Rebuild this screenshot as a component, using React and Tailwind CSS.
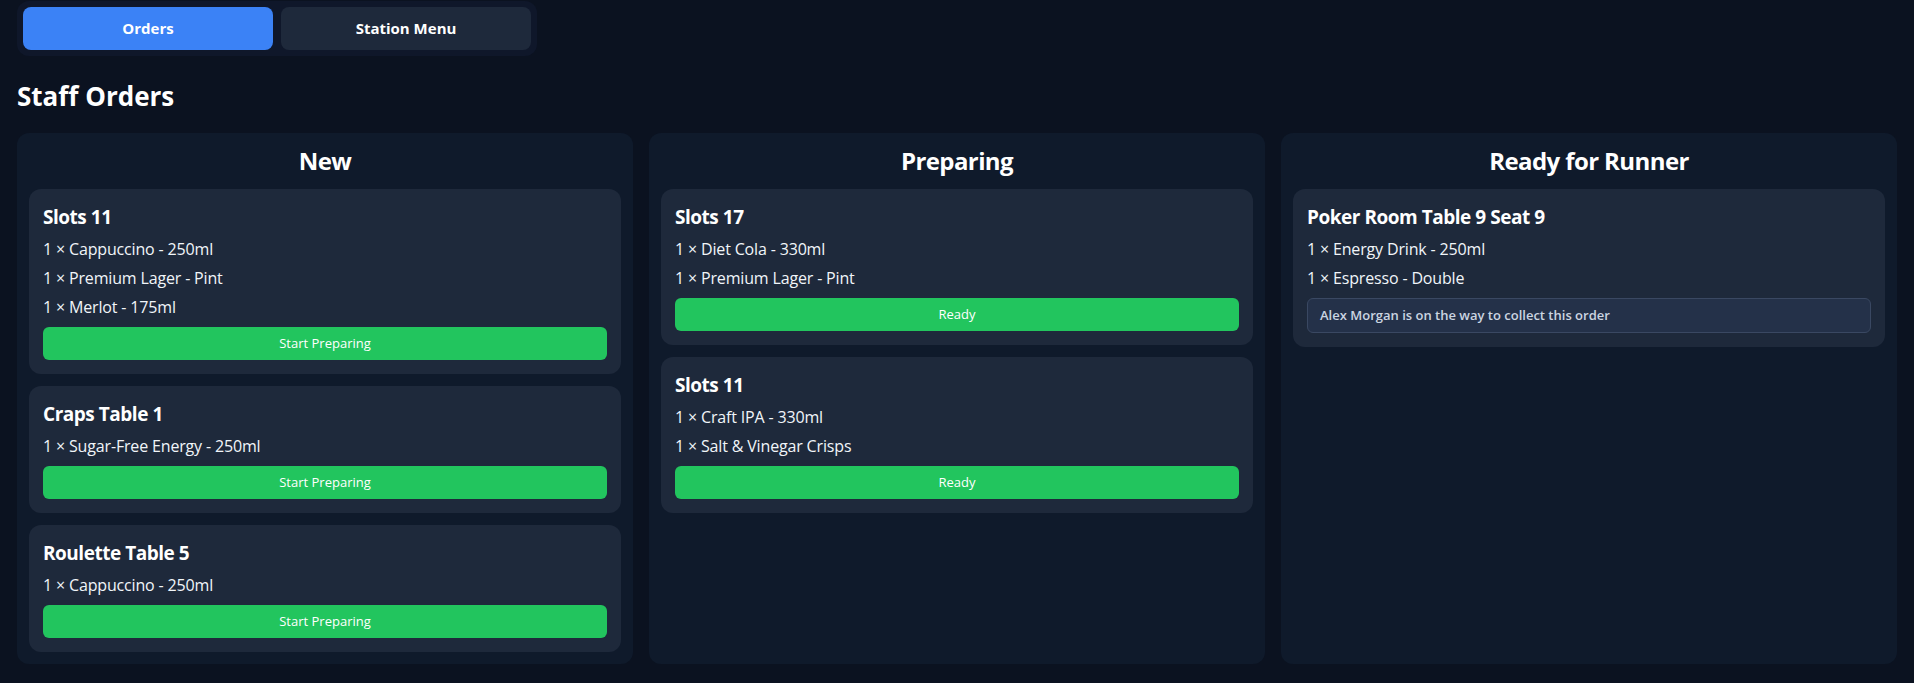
import { useState } from "react";

const columns = [
    {
        title: "New",
        orders: [
            { place: "Slots 11", items: ["Cappuccino - 250ml", "Premium Lager - Pint", "Merlot - 175ml"] },
            { place: "Craps Table 1", items: ["Sugar-Free Energy - 250ml"] },
            { place: "Roulette Table 5", items: ["Cappuccino - 250ml"] },
        ],
        action: "Start Preparing",
    },
    {
        title: "Preparing",
        orders: [
            { place: "Slots 17", items: ["Diet Cola - 330ml", "Premium Lager - Pint"] },
            { place: "Slots 11", items: ["Craft IPA - 330ml", "Salt & Vinegar Crisps"] },
        ],
        action: "Ready",
    },
    {
        title: "Ready for Runner",
        orders: [
            {
                place: "Poker Room Table 9 Seat 9",
                items: ["Energy Drink - 250ml", "Espresso - Double"],
                runner: "Alex Morgan",
            },
        ],
    },
];

function OrderCard({ order, action }) {
    return (
        <div className="bg-[#1e293b] rounded-xl p-3.5">
            <h3 className="text-[19px] font-bold leading-7 tracking-tight text-white">{order.place}</h3>
            <div className="mt-1.5 flex flex-col gap-[5px]">
                {order.items.map((item, i) => (
                    <p key={i} className="text-base leading-6 tracking-[-0.01em] text-[#f1f5f9]">
                        1 × {item}
                    </p>
                ))}
            </div>

            {action && (
                <button className="mt-2 w-full h-[33px] bg-[#22c55e] text-white text-[13px] rounded-md cursor-pointer">
                    {action}
                </button>
            )}

            {order.runner && (
                <div className="mt-2 bg-[#243149] border border-[#3a4862] rounded-md px-3 py-2 text-[13px] leading-[17px] font-semibold text-[#cbd5e1]">
                    {order.runner} is on the way to collect this order
                </div>
            )}
        </div>
    );
}

function App() {
    const [tab, setTab] = useState("orders");

    return (
        <div className="min-h-screen bg-[#0b1220] px-[17px] pb-5 pt-px font-['Open_Sans',sans-serif] text-white">
            {/* Tabs */}
            <div className="inline-flex gap-2 p-1.5 rounded-xl bg-[#0f172a]">
                <button
                    onClick={() => setTab("orders")}
                    className={`w-[250px] h-[43px] rounded-lg text-[15px] font-bold cursor-pointer ${tab === "orders" ? "bg-[#3b82f6]" : "bg-[#1e293b]"}`}
                >
                    Orders
                </button>
                <button
                    onClick={() => setTab("menu")}
                    className={`w-[250px] h-[43px] rounded-lg text-[15px] font-bold cursor-pointer ${tab === "menu" ? "bg-[#3b82f6]" : "bg-[#1e293b]"}`}
                >
                    Station Menu
                </button>
            </div>

            <h1 className="mt-[22px] mb-[19px] text-[26px] leading-9 font-bold">Staff Orders</h1>

            {/* Board */}
            <div className="grid grid-cols-3 gap-4">
                {columns.map((col) => (
                    <div key={col.title} className="bg-[#0f1a2b] rounded-xl p-3">
                        <h2 className="text-2xl leading-8 font-bold tracking-tight text-center mb-3">{col.title}</h2>
                        <div className="flex flex-col gap-3">
                            {col.orders.map((order, i) => (
                                <OrderCard key={i} order={order} action={col.action} />
                            ))}
                        </div>
                    </div>
                ))}
            </div>
        </div>
    );
}

export default App;
